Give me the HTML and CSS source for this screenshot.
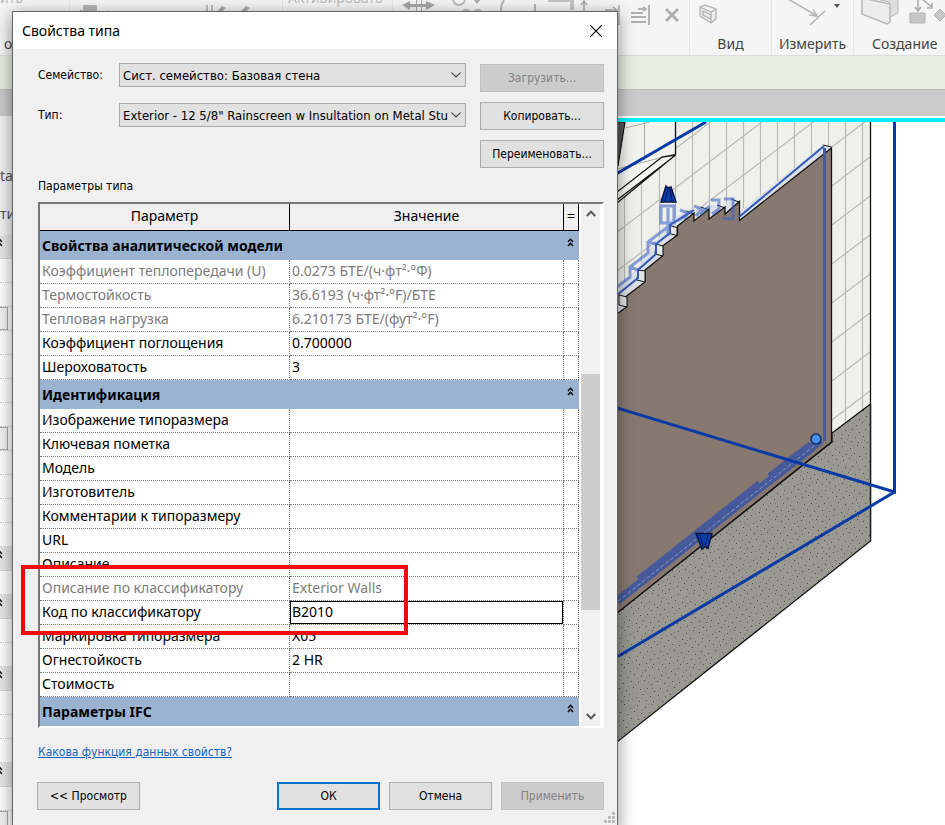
FILE: index.html
```html
<!DOCTYPE html>
<html lang="ru">
<head>
    <meta charset="UTF-8">
    <meta name="viewport" content="width=device-width, initial-scale=1.0">
    <title>Свойства типа</title>
    <link rel="stylesheet" href="styles.css">
</head>
<body>
    <svg class="defs" width="0" height="0" aria-hidden="true">
        <symbol id="collapse" viewBox="0 0 7 9">
            <path d="M1 4 L3.5 1.2 L6 4 M1 8 L3.5 5.2 L6 8" fill="none" stroke="currentColor" stroke-width="1.4"/>
        </symbol>
        <symbol id="chevron" viewBox="0 0 10 6">
            <path d="M.5 .7 L5 5 L9.5 .7" fill="none" stroke="currentColor" stroke-width="1.1"/>
        </symbol>
        <symbol id="arrow" viewBox="0 0 10 7">
            <path d="M.8 1 L5 5.4 L9.2 1" fill="none" stroke="currentColor" stroke-width="2"/>
        </symbol>
    </svg>

    <div class="app">
        <!-- Ribbon -->
        <header class="ribbon">
            <div class="ribbon-group group-clip">
                <span class="ribbon-top">ить</span>
                <span class="ribbon-edge">о</span>
            </div>
            <div class="ribbon-group group-geometry">
                <svg width="200" height="26" viewBox="70 0 200 26" aria-hidden="true">
                    <path d="M83 5h14v14H83zM80 10h8v8h-8z" fill="#b9b9b9"/>
                    <path d="M106 14q3-5 5 0" fill="none" stroke="#999" stroke-width="2"/>
                    <path d="M207 5v12M212 5v12" stroke="#aaa" stroke-width="1.5"/>
                    <path d="M216 13l6-7 4 2-7 6zM240 12l6-6 4 2-7 6z" fill="#aaa"/>
                </svg>
            </div>
            <div class="ribbon-group group-activate">
                <span class="ribbon-top">Активировать</span>
            </div>
            <div class="ribbon-group group-modify">
                <svg width="292" height="32" viewBox="393 0 292 32" aria-hidden="true">
                    <path d="M402 5l8-4v3h16v-3l9 4-9 5V7h-16v3zM416 0h1v14h-1zM421 0h1v14h-1z" fill="#a5a5a5"/>
                    <circle cx="459" cy="-1" r="6" fill="none" stroke="#bbb" stroke-width="2"/>
                    <path d="M474 0l6 0-3 4z" fill="#aaa"/>
                    <circle cx="466" cy="14" r="5" fill="#bbb"/><circle cx="478" cy="14" r="5" fill="#bbb"/>
                    <path d="M504 0q-5 8-2 16M535 4v8" fill="none" stroke="#b5b5b5" stroke-width="2"/>
                    <path d="M548 0h26v10h-4V2h-22z" fill="#c4c4c4"/>
                    <path d="M584 14V2M581 5l3-4 3 4M605 10h12M613 7l4 3-4 3M619 5v20" fill="none" stroke="#aaa" stroke-width="1.5"/>
                    <path d="M631 13h12M631 17h15M631 22h15M638 9h8M643 7l3 2-3 2M649 5v20" fill="none" stroke="#b0b0b0" stroke-width="2"/>
                    <path d="M666 9l12 12M678 9l-12 12" stroke="#b0b0b0" stroke-width="3"/>
                </svg>
            </div>
            <div class="ribbon-group group-view">
                <svg width="80" height="32" viewBox="692 0 80 32" aria-hidden="true">
                    <path d="M701 7l5-2 11 4v10l-5 4-11-7zM701 7l11 5 5-3M712 12v11M704 11l8 4v4l-8-4z" fill="#ececec" stroke="#b0b0b0" stroke-width="1.3"/>
                </svg>
                <span class="ribbon-label">Вид</span>
            </div>
            <div class="ribbon-group group-view">
                <svg width="80" height="32" viewBox="773 0 80 32" aria-hidden="true">
                    <path d="M788 -1L817 16M813 9l4 7-8-1M810 25l15-14" fill="none" stroke="#b5b5b5" stroke-width="1.5"/>
                    <path d="M834 4h6l-3 4z" fill="#555"/>
                </svg>
                <span class="ribbon-label">Измерить</span>
            </div>
            <div class="ribbon-group group-create">
                <svg width="91" height="32" viewBox="854 0 91 32" aria-hidden="true">
                    <path d="M872 -2h26v15l-9 5V2z" fill="#ddd" stroke="#bbb"/>
                    <path d="M862 -2l28 6v18l-3 2-25-10z" fill="#ececec" stroke="#b8b8b8" stroke-width="1.5"/>
                    <path d="M910 13h15v10h-15zM934 15l6-6 6 6-6 6z" fill="#c6c6c6" stroke="#b3b3b3"/>
                    <path d="M918 0v10M915 7l3 4 3-4M923 0l9 7M932 3v5h-5" fill="none" stroke="#aaa" stroke-width="1.5"/>
                </svg>
                <span class="ribbon-label">Создание</span>
            </div>
        </header>
        <div class="options-bar"></div>
        <div class="tab-strip"></div>

        <div class="workspace">
            <!-- Docked properties palette -->
            <aside class="palette">
                <div class="palette-head"><span>ta</span><span>ти</span></div>
                <div class="palette-section"><svg width="7" height="9"><use href="#collapse"/></svg></div>
                <div class="palette-row"></div>
                <div class="palette-row"></div>
                <div class="palette-row boxed"></div>
                <div class="palette-row"></div>
                <div class="palette-row"></div>
                <div class="palette-row"></div>
                <div class="palette-row"></div>
                <div class="palette-row boxed"></div>
                <div class="palette-row"></div>
                <div class="palette-row"></div>
                <div class="palette-row"></div>
                <div class="palette-row"></div>
                <div class="palette-section"><svg width="7" height="9"><use href="#collapse"/></svg></div>
                <div class="palette-row"></div>
                <div class="palette-section"><svg width="7" height="9"><use href="#collapse"/></svg></div>
                <div class="palette-row"></div>
                <div class="palette-row"></div>
                <div class="palette-section"><svg width="7" height="9"><use href="#collapse"/></svg></div>
                <div class="palette-row"></div>
                <div class="palette-row"></div>
                <div class="palette-row"></div>
                <div class="palette-section"><svg width="7" height="9"><use href="#collapse"/></svg></div>
                <div class="palette-row"></div>
                <div class="palette-row boxed"></div>
            </aside>

            <!-- 3D view -->
            <main class="view">
                <svg width="328" height="703" viewBox="617 122 328 703" aria-label="3D вид">
                    <defs>
                        <pattern id="soil" width="41" height="37" patternUnits="userSpaceOnUse">
                            <rect width="41" height="37" fill="#999992"/>
                            <path d="M2 3h1M9 1h1M15 5h1M22 2h1M30 4h1M37 1h1M5 9h1M12 11h1M19 8h1M26 10h1M34 9h1M39 12h1M1 15h1M8 17h1M16 15h1M23 16h1M29 14h1M36 18h1M4 22h1M11 24h1M18 21h1M25 23h1M32 22h1M39 25h1M2 29h1M9 30h1M14 28h1M21 31h1M28 28h1M35 30h1M6 35h1M13 34h1M24 35h1M31 34h1M38 35h1" transform="translate(0 .5)" stroke="#4f4f48"/>
                            <path d="M6 5h1M18 3h1M27 6h1M33 1h1M10 7h1M22 12h1M31 11h1M4 13h1M13 20h1M20 18h1M33 16h1M7 26h1M22 27h1M30 25h1M37 22h1M17 33h1M27 32h1M3 33h1" transform="translate(0 .5)" stroke="#777770"/>
                        </pattern>
                        <clipPath id="wall-clip"><path d="M617 122H871V404L617 606z"/></clipPath>
                    </defs>

                    <!-- back wall with tile grid -->
                    <path d="M617 122H871V404L617 606z" fill="#f0f0eb"/>
                    <g clip-path="url(#wall-clip)" stroke="#b9b9b6" stroke-width="1.2" fill="none">
                        <path d="M624.500 122V400M641.500 122V400M659.500 122V400M675.500 122V400M692.500 122V400M709.500 122V400M726.500 122V400M743.500 122V400M760.500 122V400M777.500 122V400M794.500 122V400M811.500 122V400M828.500 122V440M845.500 122V440M862.500 122V440"/>
                        <path d="M870 1L617 193M870 40L617 232M870 79L617 271M870 118L617 310M870 157L617 349M870 196L617 388M870 235L617 427M870 274L617 466M870 313L617 505M870 352L617 544M870 391L617 583"/>
                    </g>
                    <path d="M617 122H675V155L617 172z" fill="#f2f2ee"/>
                    <path d="M675 155L617 170V203z" fill="#f6f6f3"/>
                    <path d="M644.500 122V160M625 128L650 122M617 169L675 154" stroke="#aaa" fill="none"/>
                    <path d="M617 122h8l-7 44h-1z" fill="#555" stroke="#000"/>
                    <path d="M675.500 122V155L617 203M675 155L662 157L617 192M672 158L617 200" fill="none" stroke="#111" stroke-width="1.300"/>
                    <path d="M870.500 122V541" stroke="#111" stroke-width="1.300"/>

                    <!-- ground -->
                    <path d="M870.500 404L832 433V442L617 613V742L870.500 541z" fill="url(#soil)" stroke="#111" stroke-width="1.300"/>

                    <!-- selected wall -->
                    <path d="M831.500 147L823 145L740 211V202L732 200L722 207L711 204L700 212L689 209L670 221V225L656 241L638 267L617 289V320L740 224z" fill="#dcdfe5"/>
                    <path d="M831.500 148L739.500 220.500V201.500L725 214V207L709 219V209L694 221V213L677.500 226V235L662.500 246V256L645 270V282L626.500 296V307L617 314V613L831.500 442z" fill="#87796f" stroke="#111" stroke-width="1.300"/>
                    <path d="M831.500 147L823 145M739 202l-8-3M725 208l-8-3M709 210l-8-3M694 214l-8-3" stroke="#111" fill="none"/>
                    <g fill="#e4e5e6" stroke="#111">
                        <path d="M669.500 225.500l7.500 2v8l-7.500-2zM656 244l7 2v10l-8-2zM638 270l7 1v11l-8-2zM619 295l8 2v10l-8-2z"/>
                    </g>
                    <path d="M617 295L638 278V270L656 254V244L670 233V225L694 210M739 217L824 146" fill="none" stroke="#3159b8" stroke-width="2"/>
                    <g fill="none" stroke="#3c66c4" stroke-width="3" opacity=".6">
                        <path d="M617 287L630 277V267L648 253V242L669 226M630 267l8 3M648 242l8 2M661 206h13v17h-13zM668 208v28M680 210l8 3-4 6M694 206l8 3-6 7M711 200h8v9l-7 5M724 199h9v20l-10-1M677 221L692 211M700 214l10-8"/>
                    </g>
                    <path d="M824.500 148V441" stroke="#45599b" stroke-width="3"/>
                    <path d="M821 440L617 601" stroke="#45599b" stroke-width="8"/>
                    <path d="M812 446L771 478M761 485L640 581" stroke="#45599b" stroke-width="11"/>
                    <path d="M819 442L617 602" stroke="#8b9ac4" stroke-dasharray="4 2"/>

                    <!-- section box -->
                    <path d="M617 173.500L706 122M894.500 122V492L617 408M894.500 492L617 657" fill="none" stroke="#0a3aa5" stroke-width="3"/>

                    <!-- grips -->
                    <path d="M666 186l2 2 3-1 5 15h-15zM696 533.500h16l-4 15-3-2-3 3z" fill="#0a3fb0" stroke="#07173f" stroke-width="1.500"/>
                    <path d="M668 189l-3 12M670 189l2 12M700 535l3 11M708 535l-3 11" stroke="#07173f"/>
                    <circle cx="816" cy="439" r="5" fill="#4690ee" stroke="#122c55" stroke-width="1.500"/>
                </svg>
            </main>
        </div>
    </div>

    <!-- Type properties dialog -->
    <div class="dialog" role="dialog" aria-labelledby="dialog-title">
        <div class="title-bar">
            <h1 id="dialog-title">Свойства типа</h1>
            <button class="close" aria-label="Закрыть">
                <svg width="12" height="12" viewBox="0 0 12 12"><path d="M0 0L12 12M12 0L0 12" stroke="#000" stroke-width="1.200"/></svg>
            </button>
        </div>

        <div class="dialog-body">
            <div class="type-form">
                <div class="fields">
                    <div class="field">
                        <label for="family">Семейство:</label>
                        <div class="select-box">
                            <select id="family"><option>Сист. семейство: Базовая стена</option></select>
                            <svg width="10" height="6"><use href="#chevron"/></svg>
                        </div>
                    </div>
                    <div class="field">
                        <label for="type">Тип:</label>
                        <div class="select-box">
                            <select id="type"><option>Exterior - 12 5/8" Rainscreen w Insultation on Metal Stu</option></select>
                            <svg width="10" height="6"><use href="#chevron"/></svg>
                        </div>
                    </div>
                </div>
                <div class="type-actions">
                    <button class="btn" disabled>Загрузить...</button>
                    <button class="btn">Копировать...</button>
                    <button class="btn">Переименовать...</button>
                </div>
            </div>

            <h2 class="caption">Параметры типа</h2>

            <div class="grid-box">
                <table class="params">
                    <colgroup><col class="col-name"><col><col class="col-eq"></colgroup>
                    <thead>
                        <tr><th>Параметр</th><th>Значение</th><th>=</th></tr>
                    </thead>
                    <tbody>
                        <tr class="category"><th colspan="2">Свойства аналитической модели</th><td><button class="fold" aria-label="Свернуть"><svg width="7" height="9"><use href="#collapse"/></svg></button></td></tr>
                        <tr class="readonly"><td>Коэффициент теплопередачи (U)</td><td>0.0273 БТЕ/(ч·фт²·°Ф)</td><td></td></tr>
                        <tr class="readonly"><td>Термостойкость</td><td>36.6193 (ч·фт²·°F)/БТЕ</td><td></td></tr>
                        <tr class="readonly"><td>Тепловая нагрузка</td><td>6.210173 БТЕ/(фут²·°F)</td><td></td></tr>
                        <tr><td>Коэффициент поглощения</td><td>0.700000</td><td></td></tr>
                        <tr><td>Шероховатость</td><td>3</td><td></td></tr>
                        <tr class="category"><th colspan="2">Идентификация</th><td><button class="fold" aria-label="Свернуть"><svg width="7" height="9"><use href="#collapse"/></svg></button></td></tr>
                        <tr><td>Изображение типоразмера</td><td></td><td></td></tr>
                        <tr><td>Ключевая пометка</td><td></td><td></td></tr>
                        <tr><td>Модель</td><td></td><td></td></tr>
                        <tr><td>Изготовитель</td><td></td><td></td></tr>
                        <tr><td>Комментарии к типоразмеру</td><td></td><td></td></tr>
                        <tr><td>URL</td><td></td><td></td></tr>
                        <tr><td>Описание</td><td></td><td></td></tr>
                        <tr class="readonly"><td>Описание по классификатору</td><td>Exterior Walls</td><td></td></tr>
                        <tr><td><label for="code">Код по классификатору</label></td><td class="editing"><input id="code" type="text" value="B2010"></td><td></td></tr>
                        <tr><td>Маркировка типоразмера</td><td>X05</td><td></td></tr>
                        <tr><td>Огнестойкость</td><td>2 HR</td><td></td></tr>
                        <tr><td>Стоимость</td><td></td><td></td></tr>
                        <tr class="category"><th colspan="2">Параметры IFC</th><td><button class="fold" aria-label="Свернуть"><svg width="7" height="9"><use href="#collapse"/></svg></button></td></tr>
                    </tbody>
                </table>
                <div class="scrollbar">
                    <svg class="arrow-up" width="10" height="7"><use href="#arrow"/></svg>
                    <div class="track"><div class="thumb"></div></div>
                    <svg width="10" height="7"><use href="#arrow"/></svg>
                </div>
                <div class="highlight"></div>
            </div>

            <a class="help-link" href="#">Какова функция данных свойств?</a>

            <div class="footer">
                <button class="btn preview">&lt;&lt; Просмотр</button>
                <button class="btn default">ОК</button>
                <button class="btn">Отмена</button>
                <button class="btn" disabled>Применить</button>
            </div>
        </div>
        <svg class="size-grip" width="12" height="12" viewBox="0 0 12 12" aria-hidden="true">
            <path d="M8 0h3v3H8zM4 4h3v3H4zM8 4h3v3H8zM0 8h3v3H0zM4 8h3v3H4zM8 8h3v3H8z" fill="#bdbdbd"/>
        </svg>
    </div>
</body>
</html>
```
FILE: styles.css
```css
* {
    box-sizing: border-box;
}
body {
    margin: 0;
    height: 100vh;
    overflow: hidden;
    position: relative;
    font-family: "DejaVu Sans Condensed", "Liberation Sans", sans-serif;
    font-size: 12px;
    color: #000;
    background-color: #fff;
}
.defs {
    position: absolute;
}
button, select, input {
    font: inherit;
    color: inherit;
}

/* Application behind the dialog */
.app {
    height: 100%;
    display: flex;
    flex-direction: column;
    font-family: "Noto Sans", sans-serif;
}
.ribbon {
    display: flex;
    flex: none;
    height: 55px;
    overflow: hidden;
    background-color: #f5f5f5;
    color: #444;
    font-size: 14px;
}
.ribbon-group {
    display: flex;
    flex-direction: column;
    flex: none;
    overflow: hidden;
    border-right: 1px solid #e6e6e6;
}
.ribbon-group svg {
    flex: none;
}
.group-clip {
    width: 70px;
}
.group-geometry {
    width: 213px;
}
.group-activate {
    width: 110px;
    padding-left: 5px;
}
.group-modify {
    flex: 1;
}
.group-view {
    width: 82px;
    align-items: center;
}
.group-create {
    width: 91px;
    border-right: none;
}
.group-create .ribbon-label {
    padding-left: 18px;
}
.ribbon-top {
    margin-top: -12px;
    line-height: 20px;
    color: #bbb;
}
.ribbon-edge {
    padding: 26px 0 0 4px;
    line-height: 20px;
}
.ribbon-label {
    line-height: 24px;
}
.options-bar {
    flex: none;
    height: 35px;
    background-color: #e8eee0;
    border-top: 1px solid #ddd;
    border-bottom: 1px solid #bbb;
}
.tab-strip {
    flex: none;
    height: 26px;
    background-color: #cbcbcb;
}
.workspace {
    flex: 1;
    display: flex;
    min-height: 0;
}
.palette {
    flex: none;
    width: 12px;
    overflow: hidden;
    background-color: #fff;
}
.palette-head {
    height: 119px;
    padding-top: 48px;
    display: flex;
    flex-direction: column;
    gap: 14px;
    background-color: #f2f2f2;
    color: #555;
    font-size: 14px;
    line-height: 24px;
}
.palette-row, .palette-section {
    height: 24px;
    border-bottom: 1px dotted #ccc;
}
.palette-section {
    margin-left: -4px;
    padding-top: 3px;
    background-color: #e8e8e8;
    line-height: 0;
}
.palette-row.boxed::before {
    content: "";
    display: block;
    width: 7px;
    height: 21px;
    border: 1px solid #aaa;
    border-left: none;
    background-color: #f2f2f2;
}
.view {
    flex: 1;
    display: flex;
    justify-content: flex-end;
    align-items: flex-start;
    overflow: hidden;
    margin-top: 2px;
    border-top: 4px solid #00f0ff;
    background-color: #fff;
}
.view svg {
    flex: none;
}

/* Dialog window */
.dialog {
    position: absolute;
    top: 11px;
    left: 12px;
    right: 327px;
    min-width: 560px;
    min-height: 820px;
    border: 1px solid #666;
    background-color: #f0f0f0;
    box-shadow: 0 4px 16px rgba(0, 0, 0, 0.45);
}
.title-bar {
    display: flex;
    justify-content: space-between;
    align-items: center;
    height: 37px;
    padding: 0 15px 0 9px;
    background-color: #fff;
}
.title-bar h1 {
    margin: 0;
    font: 14px "Noto Sans", sans-serif;
}
.close {
    display: flex;
    padding: 0;
    border: none;
    background: none;
}
.dialog-body {
    padding: 14px 13px 0 25px;
}
.type-form {
    display: flex;
    gap: 14px;
}
.fields {
    flex: 1;
    display: flex;
    flex-direction: column;
    gap: 16px;
}
.field {
    display: flex;
    align-items: center;
}
.field label {
    width: 81px;
}
.select-box {
    flex: 1;
    display: grid;
    align-items: center;
}
.select-box select, .select-box svg {
    grid-area: 1 / 1;
}
.select-box select {
    appearance: none;
    width: 100%;
    height: 24px;
    padding: 0 16px 0 3px;
    border: 1px solid #a8a8a8;
    border-radius: 0;
    background-color: #e1e1e1;
    font-size: 13px;
}
.select-box svg {
    justify-self: end;
    margin-right: 5px;
    color: #444;
    pointer-events: none;
}
.type-actions {
    display: flex;
    flex-direction: column;
    gap: 10px;
    width: 124px;
    padding-top: 1px;
}
.btn {
    height: 28px;
    padding: 0;
    border: 1px solid #adadad;
    background-color: #e1e1e1;
    text-align: center;
}
.btn:disabled {
    border-color: #bfbfbf;
    background-color: #cccccc;
    color: #838383;
}
.btn.default {
    border: 2px solid #0a74cc;
}
.caption {
    margin: 10px 0 8px;
    font-size: 12px;
    font-weight: normal;
    line-height: 16px;
}

/* Parameter grid */
.grid-box {
    position: relative;
    display: flex;
    gap: 2px;
    border: 2px solid #fff;
    border-top-color: #777;
    border-left-color: #777;
    background-color: #fff;
}
.params {
    flex: 1;
    table-layout: fixed;
    border-collapse: separate;
    border-spacing: 0;
    font-family: "Noto Sans", sans-serif;
    font-size: 14px;
    line-height: 20px;
}
.col-name {
    width: 250px;
}
.col-eq {
    width: 15px;
}
.params th, .params td {
    height: 24px;
    padding: 0 2px 2px;
    text-align: left;
    white-space: nowrap;
    border-right: 1px dotted #777;
    border-bottom: 1px dotted #777;
}
.params thead th {
    height: 27px;
    border-right: 1px solid #000;
    border-bottom: 1px solid #000;
    background-color: #f0f0f0;
    font-weight: normal;
    text-align: center;
}
.params .category th, .params .category td {
    height: 29px;
    padding-bottom: 0;
    border: none;
    background-color: #9ab3d1;
    font-weight: bold;
}
.params .readonly td {
    color: #7c7c7c;
}
.params .category td {
    padding: 7px 3px 0 0;
    vertical-align: top;
}
.fold {
    display: block;
    margin: 0 auto;
    padding: 0;
    border: none;
    background: none;
    line-height: 0;
}
.params .editing {
    padding: 0;
}
.editing input {
    display: block;
    width: 100%;
    height: 23px;
    padding: 0 1px 2px;
    border: 1px solid #000;
    outline: none;
    background-color: #fff;
}
.scrollbar {
    display: flex;
    flex-direction: column;
    align-items: center;
    justify-content: space-between;
    width: 19px;
    margin-right: 2px;
    padding: 6px 0;
    background-color: #f0f0f0;
    color: #555;
}
.arrow-up {
    transform: rotate(180deg);
}
.track {
    flex: 1;
    width: 100%;
    display: flex;
    flex-direction: column;
}
.track::before {
    content: "";
    flex: 157;
}
.thumb {
    flex: 236;
    background-color: #cdcdcd;
}
.track::after {
    content: "";
    flex: 103;
}
/* frame over the classifier rows */
.highlight {
    position: absolute;
    left: -19px;
    bottom: 91px;
    width: 387px;
    height: 70px;
    border: 4px solid #f20a0a;
}
.help-link {
    display: inline-block;
    margin-top: 16px;
    line-height: 16px;
    color: #1763c1;
}
.footer {
    display: flex;
    gap: 9px;
    margin: 22px 0 0 -1px;
}
.footer .btn {
    width: 103px;
}
.preview {
    margin-right: auto;
}
.size-grip {
    position: absolute;
    right: 1px;
    top: 800px;
}
```
